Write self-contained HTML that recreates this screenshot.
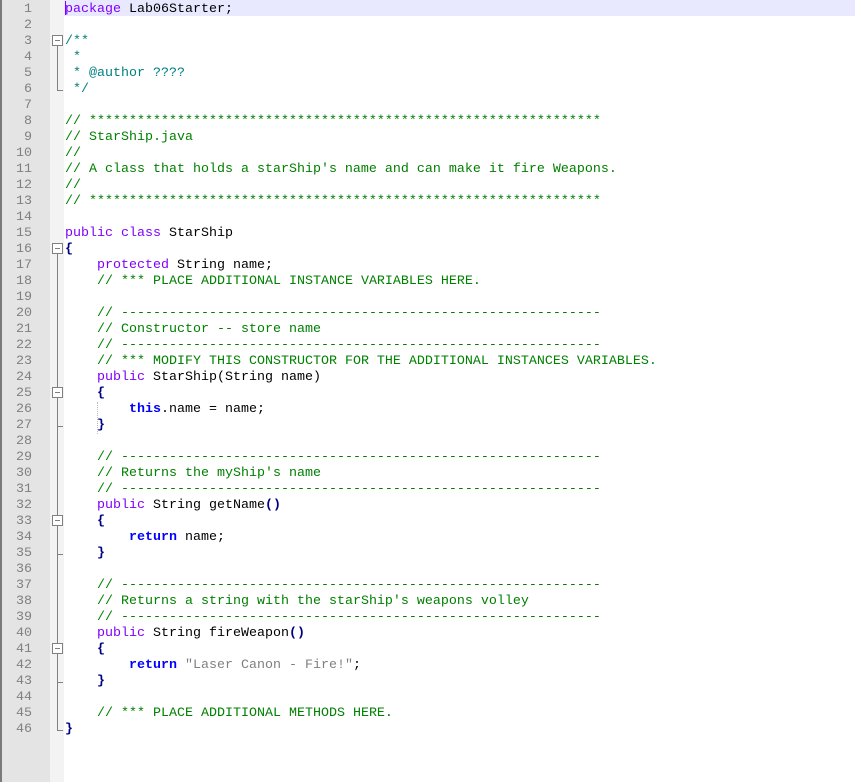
<!DOCTYPE html><html><head><style>
body{margin:0;width:855px;height:782px;overflow:hidden;background:#fff;position:relative;font-family:"Liberation Mono",monospace;font-size:13.33px}
#b{position:absolute;left:0;top:0;width:2px;height:782px;background:#7a7a7a}
#n{position:absolute;left:2px;top:0;width:48px;height:782px;background:#e4e4e4}
#f{position:absolute;left:50px;top:0;width:14px;height:782px;background:#f3f3f3}
.l{position:absolute;left:65px;height:16px;line-height:16px;white-space:pre;color:#000}
.ln{position:absolute;left:2px;width:30px;text-align:right;height:16px;line-height:16px;color:#808080}
.k{color:#8000ff}.c{color:#008000}.d{color:#008080}.bl{color:#0000ff;font-weight:bold}.br{color:#000080;font-weight:bold}.s{color:#808080}
.fx{position:absolute;left:52px;width:9px;height:9px;border:1px solid #808080;background:#fff}
.fx:after{content:"";position:absolute;left:2px;top:4px;width:5px;height:1px;background:#808080}
.v{position:absolute;left:57px;width:1px;background:#808080}
.h{position:absolute;left:57px;width:6px;height:1px;background:#808080}
</style></head><body>
<div id="b"></div><div id="n"></div><div id="f"></div>
<div style="position:absolute;left:64px;top:0;width:791px;height:16px;background:#e8e8ff"></div>
<div style="position:absolute;left:65px;top:1px;width:1px;height:14px;background:#8000ff"></div>
<div id="code"></div>
<script>
var S='****************************************************************';
var D='------------------------------------------------------------';
var L=[
'<span class="k">package</span> Lab06Starter;','',
'<span class="d">/**</span>','<span class="d"> *</span>','<span class="d"> * @author ????</span>','<span class="d"> */</span>','',
'<span class="c">// '+S+'</span>',
'<span class="c">// StarShip.java</span>','<span class="c">//</span>',
'<span class="c">// A class that holds a starShip\'s name and can make it fire Weapons.</span>',
'<span class="c">//</span>',
'<span class="c">// '+S+'</span>','',
'<span class="k">public</span> <span class="k">class</span> StarShip',
'<span class="br">{</span>',
'    <span class="k">protected</span> String name;',
'    <span class="c">// *** PLACE ADDITIONAL INSTANCE VARIABLES HERE.</span>','',
'    <span class="c">// '+D+'</span>',
'    <span class="c">// Constructor -- store name</span>',
'    <span class="c">// '+D+'</span>',
'    <span class="c">// *** MODIFY THIS CONSTRUCTOR FOR THE ADDITIONAL INSTANCES VARIABLES.</span>',
'    <span class="k">public</span> StarShip(String name)',
'    <span class="br">{</span>',
'        <span class="bl">this</span>.name = name;',
'    <span class="br">}</span>','',
'    <span class="c">// '+D+'</span>',
'    <span class="c">// Returns the myShip\'s name</span>',
'    <span class="c">// '+D+'</span>',
'    <span class="k">public</span> String getName<span class="br">()</span>',
'    <span class="br">{</span>',
'        <span class="bl">return</span> name;',
'    <span class="br">}</span>','',
'    <span class="c">// '+D+'</span>',
'    <span class="c">// Returns a string with the starShip\'s weapons volley</span>',
'    <span class="c">// '+D+'</span>',
'    <span class="k">public</span> String fireWeapon<span class="br">()</span>',
'    <span class="br">{</span>',
'        <span class="bl">return</span> <span class="s">"Laser Canon - Fire!"</span>;',
'    <span class="br">}</span>','',
'    <span class="c">// *** PLACE ADDITIONAL METHODS HERE.</span>',
'<span class="br">}</span>'];
var h='';
for(var i=0;i<L.length;i++){var t=i*16+2;
h+='<div class="ln" style="top:'+t+'px">'+(i+1)+'</div><div class="l" style="top:'+t+'px">'+L[i]+'</div>';}
function box(n){return '<div class="fx" style="top:'+((n-1)*16+3)+'px"></div>';}
function vl(a,b){return '<div class="v" style="top:'+a+'px;height:'+(b-a)+'px"></div>';}
function hl(y){return '<div class="h" style="top:'+y+'px"></div>';}
h+=box(3)+vl(45,90)+hl(90);
h+=box(16)+vl(253,730)+hl(730);
[25,33,41].forEach(function(n){var t=(n-1)*16;h+=box(n);h+=hl(t+42);});
h+='<div style="position:absolute;left:97px;top:402px;height:32px;border-left:1px dotted #bbb"></div>';
document.getElementById('code').innerHTML=h;
</script>
</body></html>
